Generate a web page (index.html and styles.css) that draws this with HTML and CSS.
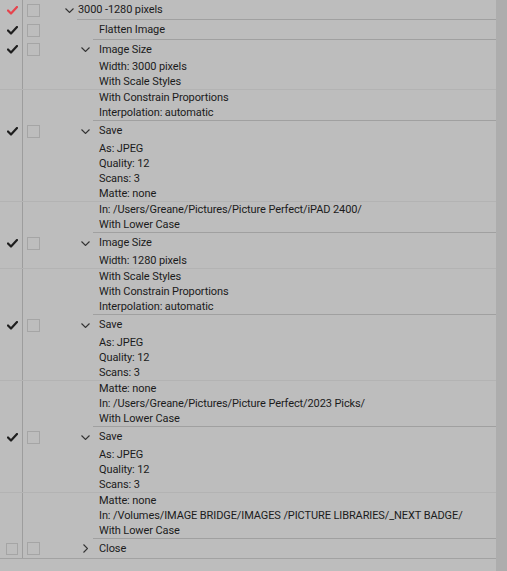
FILE: index.html
```html
<!DOCTYPE html>
<html>
<head>
<meta charset="utf-8">
<link rel="stylesheet" href="styles.css">
</head>
<body>
<div class="panel">
  <div class="list">
    <div class="row">
      <div class="toggle"><svg class="check red" width="11" height="9" viewBox="0 0 11 9"><polyline points="1,4.5 4,7.5 10,1"/></svg></div>
      <div class="dlg"><span class="box"></span></div>
      <div class="twist twist-set"><svg class="chev" width="9" height="5" viewBox="0 0 9 5"><polyline points="0.5,0.5 4.5,4.5 8.5,0.5"/></svg></div>
      <div class="label label-set sep">3000 -1280 pixels</div>
    </div>

    <div class="row">
      <div class="toggle"><svg class="check" width="11" height="9" viewBox="0 0 11 9"><polyline points="1,4.5 4,7.5 10,1"/></svg></div>
      <div class="dlg"><span class="box"></span></div>
      <div class="twist"></div>
      <div class="label sep">Flatten Image</div>
    </div>

    <div class="row row-short">
      <div class="toggle"><svg class="check" width="11" height="9" viewBox="0 0 11 9"><polyline points="1,4.5 4,7.5 10,1"/></svg></div>
      <div class="dlg"><span class="box"></span></div>
      <div class="twist"><svg class="chev" width="9" height="5" viewBox="0 0 9 5"><polyline points="0.5,0.5 4.5,4.5 8.5,0.5"/></svg></div>
      <div class="label">Image Size</div>
    </div>
    <div class="row row-sub"><div class="toggle"></div><div class="dlg"></div><div class="twist"></div><div class="label">Width: 3000 pixels</div></div>
    <div class="row row-sub"><div class="toggle"></div><div class="dlg"></div><div class="twist"></div><div class="label">With Scale Styles</div></div>
    <div class="faint"></div>
    <div class="row row-sub"><div class="toggle"></div><div class="dlg"></div><div class="twist"></div><div class="label">With Constrain Proportions</div></div>
    <div class="row row-sub row-end"><div class="toggle"></div><div class="dlg"></div><div class="twist"></div><div class="label sep">Interpolation: automatic</div></div>

    <div class="row">
      <div class="toggle"><svg class="check" width="11" height="9" viewBox="0 0 11 9"><polyline points="1,4.5 4,7.5 10,1"/></svg></div>
      <div class="dlg"><span class="box"></span></div>
      <div class="twist"><svg class="chev" width="9" height="5" viewBox="0 0 9 5"><polyline points="0.5,0.5 4.5,4.5 8.5,0.5"/></svg></div>
      <div class="label">Save</div>
    </div>
    <div class="row row-sub"><div class="toggle"></div><div class="dlg"></div><div class="twist"></div><div class="label">As: JPEG</div></div>
    <div class="row row-sub"><div class="toggle"></div><div class="dlg"></div><div class="twist"></div><div class="label">Quality: 12</div></div>
    <div class="row row-sub"><div class="toggle"></div><div class="dlg"></div><div class="twist"></div><div class="label">Scans: 3</div></div>
    <div class="row row-sub"><div class="toggle"></div><div class="dlg"></div><div class="twist"></div><div class="label">Matte: none</div></div>
    <div class="faint"></div>
    <div class="row row-sub"><div class="toggle"></div><div class="dlg"></div><div class="twist"></div><div class="label">In: /Users/Greane/Pictures/Picture Perfect/iPAD 2400/</div></div>
    <div class="row row-sub row-end"><div class="toggle"></div><div class="dlg"></div><div class="twist"></div><div class="label sep">With Lower Case</div></div>

    <div class="row">
      <div class="toggle"><svg class="check" width="11" height="9" viewBox="0 0 11 9"><polyline points="1,4.5 4,7.5 10,1"/></svg></div>
      <div class="dlg"><span class="box"></span></div>
      <div class="twist"><svg class="chev" width="9" height="5" viewBox="0 0 9 5"><polyline points="0.5,0.5 4.5,4.5 8.5,0.5"/></svg></div>
      <div class="label">Image Size</div>
    </div>
    <div class="row row-sub"><div class="toggle"></div><div class="dlg"></div><div class="twist"></div><div class="label">Width: 1280 pixels</div></div>
    <div class="faint"></div>
    <div class="row row-sub"><div class="toggle"></div><div class="dlg"></div><div class="twist"></div><div class="label">With Scale Styles</div></div>
    <div class="row row-sub"><div class="toggle"></div><div class="dlg"></div><div class="twist"></div><div class="label">With Constrain Proportions</div></div>
    <div class="row row-sub row-end"><div class="toggle"></div><div class="dlg"></div><div class="twist"></div><div class="label sep">Interpolation: automatic</div></div>

    <div class="row">
      <div class="toggle"><svg class="check" width="11" height="9" viewBox="0 0 11 9"><polyline points="1,4.5 4,7.5 10,1"/></svg></div>
      <div class="dlg"><span class="box"></span></div>
      <div class="twist"><svg class="chev" width="9" height="5" viewBox="0 0 9 5"><polyline points="0.5,0.5 4.5,4.5 8.5,0.5"/></svg></div>
      <div class="label">Save</div>
    </div>
    <div class="row row-sub"><div class="toggle"></div><div class="dlg"></div><div class="twist"></div><div class="label">As: JPEG</div></div>
    <div class="row row-sub"><div class="toggle"></div><div class="dlg"></div><div class="twist"></div><div class="label">Quality: 12</div></div>
    <div class="row row-sub"><div class="toggle"></div><div class="dlg"></div><div class="twist"></div><div class="label">Scans: 3</div></div>
    <div class="faint"></div>
    <div class="row row-sub"><div class="toggle"></div><div class="dlg"></div><div class="twist"></div><div class="label">Matte: none</div></div>
    <div class="row row-sub"><div class="toggle"></div><div class="dlg"></div><div class="twist"></div><div class="label">In: /Users/Greane/Pictures/Picture Perfect/2023 Picks/</div></div>
    <div class="row row-sub row-end"><div class="toggle"></div><div class="dlg"></div><div class="twist"></div><div class="label sep">With Lower Case</div></div>

    <div class="row">
      <div class="toggle"><svg class="check" width="11" height="9" viewBox="0 0 11 9"><polyline points="1,4.5 4,7.5 10,1"/></svg></div>
      <div class="dlg"><span class="box"></span></div>
      <div class="twist"><svg class="chev" width="9" height="5" viewBox="0 0 9 5"><polyline points="0.5,0.5 4.5,4.5 8.5,0.5"/></svg></div>
      <div class="label">Save</div>
    </div>
    <div class="row row-sub"><div class="toggle"></div><div class="dlg"></div><div class="twist"></div><div class="label">As: JPEG</div></div>
    <div class="row row-sub"><div class="toggle"></div><div class="dlg"></div><div class="twist"></div><div class="label">Quality: 12</div></div>
    <div class="row row-sub"><div class="toggle"></div><div class="dlg"></div><div class="twist"></div><div class="label">Scans: 3</div></div>
    <div class="faint"></div>
    <div class="row row-sub"><div class="toggle"></div><div class="dlg"></div><div class="twist"></div><div class="label">Matte: none</div></div>
    <div class="row row-sub"><div class="toggle"></div><div class="dlg"></div><div class="twist"></div><div class="label">In: /Volumes/IMAGE BRIDGE/IMAGES /PICTURE LIBRARIES/_NEXT BADGE/</div></div>
    <div class="row row-sub row-end"><div class="toggle"></div><div class="dlg"></div><div class="twist"></div><div class="label sep">With Lower Case</div></div>

    <div class="row row-last">
      <div class="toggle toggle-box"><span class="box"></span></div>
      <div class="dlg"><span class="box"></span></div>
      <div class="twist twist-close"><svg class="chev" width="5" height="9" viewBox="0 0 5 9"><polyline points="0.5,0.5 4.5,4.5 0.5,8.5"/></svg></div>
      <div class="label">Close</div>
    </div>
  </div>
  <div class="scrollbar"></div>
</div>
</body>
</html>
```

FILE: styles.css
```css
html, body {
  margin: 0;
  padding: 0;
}
body {
  background: #bdbdbd;
  font-family: Roboto, "Liberation Sans", Arial, sans-serif;
  font-size: 11px;
  letter-spacing: -0.1px;
  color: #1b1b1b;
}
.panel {
  display: flex;
  height: 571px;
}
.list {
  width: 496px;
  flex: none;
  display: flex;
  flex-direction: column;
}
.scrollbar {
  flex: 1;
  background: #adadad;
}
.row {
  display: flex;
  height: 20px;
  flex: none;
}
.row-short {
  height: 19px;
}
.row-sub {
  height: 15px;
}
.row-end {
  height: 16px;
}
.row-last {
  height: 19px;
  border-bottom: 1px solid #a2a2a2;
}
.toggle {
  flex: none;
  border-right: 1px solid #9d9d9d;
  display: flex;
  align-items: center;
  padding-left: 7px;
  width: 15px;
}
.toggle-box {
  padding-left: 6px;
  width: 16px;
}
.dlg {
  width: 18px;
  flex: none;
  box-sizing: border-box;
  padding-left: 4px;
  display: flex;
  align-items: center;
}
.box {
  width: 13px;
  height: 13px;
  box-sizing: border-box;
  border: 1px solid #a5a5a5;
  display: block;
}
.toggle-box .box {
  width: 12px;
  height: 12px;
}
.twist {
  width: 52px;
  flex: none;
  box-sizing: border-box;
  padding-left: 40px;
  display: flex;
  align-items: center;
}
.twist-set {
  width: 36px;
  padding-left: 24px;
}
.twist-close {
  padding-left: 42px;
}
.label {
  flex: 1;
  min-width: 0;
  box-sizing: border-box;
  padding-left: 6px;
  padding-bottom: 1px;
  display: flex;
  align-items: center;
  white-space: nowrap;
}
.label-set {
  padding-left: 1px;
}
.sep {
  border-bottom: 1px solid #a0a0a0;
  padding-bottom: 0;
}
.faint {
  height: 1px;
  flex: none;
  background: #b3b3b3;
}
.check {
  display: block;
  fill: none;
  stroke: #1e1e1e;
  stroke-width: 2.2;
  stroke-linecap: round;
  stroke-linejoin: round;
}
.check.red {
  stroke: #e6434c;
}
.chev {
  display: block;
  fill: none;
  stroke: #333333;
  stroke-width: 1.1;
}
```
